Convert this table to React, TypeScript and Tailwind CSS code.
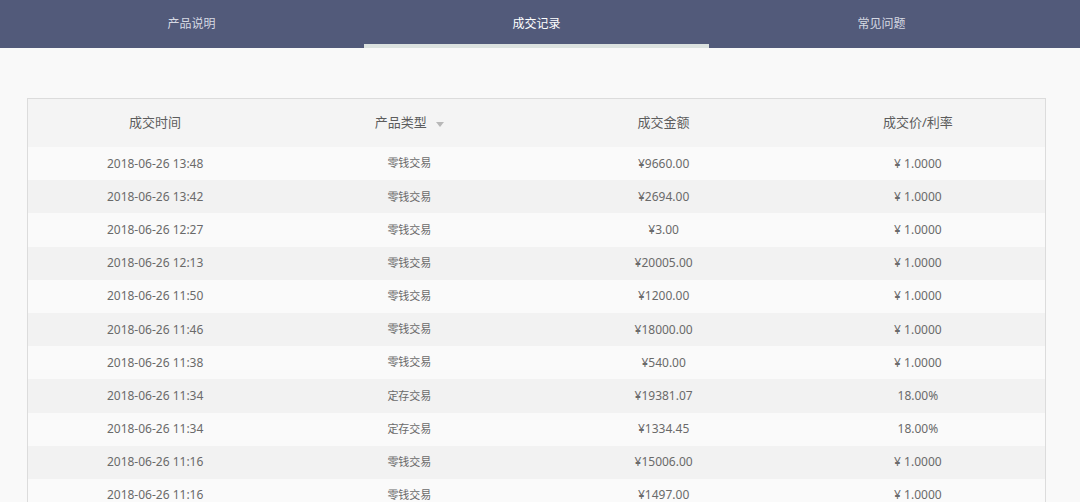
import React from "react";

const rows: [string, string, string, string][] = [
  ["2018-06-26 13:48", "零钱交易", "¥9660.00", "¥ 1.0000"],
  ["2018-06-26 13:42", "零钱交易", "¥2694.00", "¥ 1.0000"],
  ["2018-06-26 12:27", "零钱交易", "¥3.00", "¥ 1.0000"],
  ["2018-06-26 12:13", "零钱交易", "¥20005.00", "¥ 1.0000"],
  ["2018-06-26 11:50", "零钱交易", "¥1200.00", "¥ 1.0000"],
  ["2018-06-26 11:46", "零钱交易", "¥18000.00", "¥ 1.0000"],
  ["2018-06-26 11:38", "零钱交易", "¥540.00", "¥ 1.0000"],
  ["2018-06-26 11:34", "定存交易", "¥19381.07", "18.00%"],
  ["2018-06-26 11:34", "定存交易", "¥1334.45", "18.00%"],
  ["2018-06-26 11:16", "零钱交易", "¥15006.00", "¥ 1.0000"],
  ["2018-06-26 11:16", "零钱交易", "¥1497.00", "¥ 1.0000"],
];

export default function App() {
  return (
    <div
      className="w-[1080px] h-[502px] overflow-hidden bg-[#f9f9f9]"
      style={{ fontFamily: '"Noto Sans", "Noto Sans CJK SC", sans-serif' }}
    >
      <div className="h-12 bg-[#525a7a] flex pl-[19px]">
        {["产品说明", "成交记录", "常见问题"].map((t, i) => (
          <div key={t} className="w-[345px] h-12 relative flex items-center justify-center">
            <span className={`text-[12px] ${i === 1 ? "text-white" : "text-[#d6d9e3]"}`}>{t}</span>
            {i === 1 && <div className="absolute left-0 right-0 bottom-0 h-[4px] bg-[#dce2e0]" />}
          </div>
        ))}
      </div>
      <div className="pt-[50px] pl-[27px]">
        <div className="w-[1019px] border border-[#dcdcdc] bg-[#fafafa]">
          <div className="grid grid-cols-4 h-[48px] bg-[#f4f4f4] text-[13px] text-[#5c5c5c]">
            <div className="flex items-center justify-center">成交时间</div>
            <div className="flex items-center justify-center">
              产品类型
              <svg width="8" height="5" viewBox="0 0 8 5" className="ml-[9px] mt-[2px]">
                <path d="M0 0 L8 0 L4 5 Z" fill="#b8b8b8" />
              </svg>
            </div>
            <div className="flex items-center justify-center">成交金额</div>
            <div className="flex items-center justify-center">成交价/利率</div>
          </div>
          {rows.map((r, i) => (
            <div
              key={i}
              className={`grid grid-cols-4 h-[33.2px] text-[#6a6a6a] ${i % 2 === 1 ? "bg-[#f2f2f2]" : "bg-[#fafafa]"}`}
            >
              <div className="flex items-center justify-center text-[12px]">{r[0]}</div>
              <div className="flex items-center justify-center text-[11px]">{r[1]}</div>
              <div className="flex items-center justify-center text-[12px]">{r[2]}</div>
              <div className="flex items-center justify-center text-[12px]">{r[3]}</div>
            </div>
          ))}
        </div>
      </div>
    </div>
  );
}
